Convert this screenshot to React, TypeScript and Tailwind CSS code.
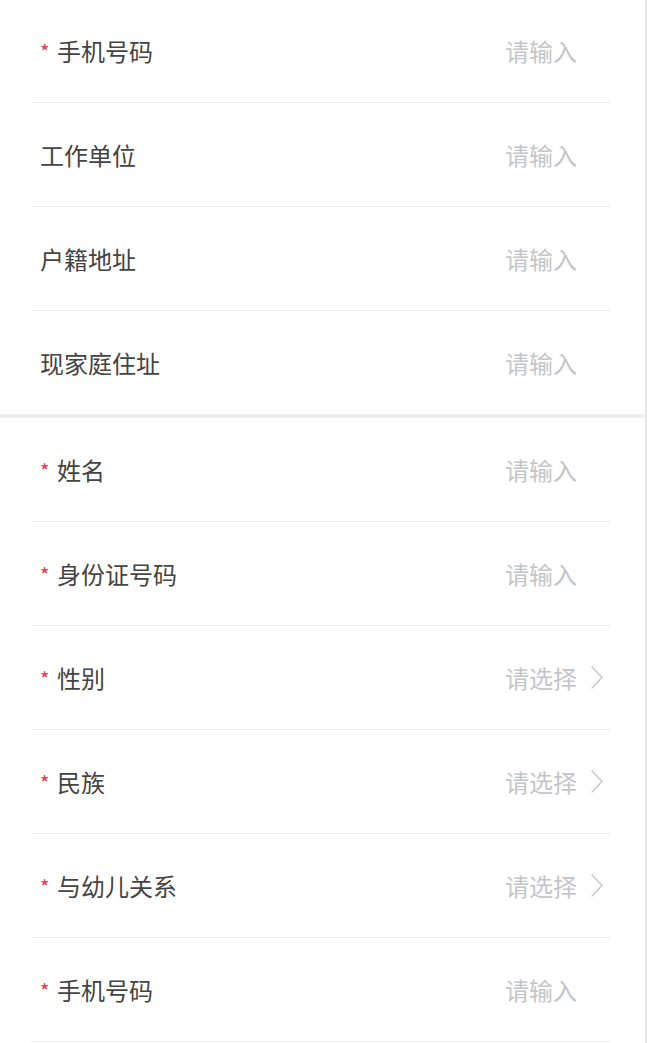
type Field = {
  label: string;
  required?: boolean;
  select?: boolean;
};

const contact: Field[] = [
  { label: '手机号码', required: true },
  { label: '工作单位' },
  { label: '户籍地址' },
  { label: '现家庭住址' },
];

const guardian: Field[] = [
  { label: '姓名', required: true },
  { label: '身份证号码', required: true },
  { label: '性别', required: true, select: true },
  { label: '民族', required: true, select: true },
  { label: '与幼儿关系', required: true, select: true },
  { label: '手机号码', required: true },
];

function Chevron() {
  return (
    <svg width="12" height="23" viewBox="0 0 12 23" fill="none" className="ml-[14px]">
      <polyline points="1,1 11,11.5 1,22" stroke="#c8c9cc" strokeWidth="1.5" strokeLinecap="round" strokeLinejoin="round" />
    </svg>
  );
}

function FormRow({ field, height, border = true }: { field: Field; height: string; border?: boolean }) {
  return (
    <div
      className={
        'ml-[31px] mr-[34px] flex items-center pl-[9px] ' + height + ' ' + (border ? 'border-b border-[#ebedf0]' : '')
      }
    >
      {field.required ? (
        <span className="w-[17px] pt-[2px] text-[20px] leading-none text-[#f0304a]">*</span>
      ) : null}
      <span className="flex-1 text-[24px] text-[#444444]">{field.label}</span>
      <span className="text-[24px] text-[#c4c5c8]">{field.select ? '请选择' : '请输入'}</span>
      <span className="flex w-[34px] items-center pr-2">{field.select ? <Chevron /> : null}</span>
    </div>
  );
}

export default function App() {
  return (
    <div
      className="flex min-h-screen w-[650px] bg-white"
      style={{ fontFamily: '"Noto Sans CJK SC", "Noto Sans", sans-serif' }}
    >
      <div className="w-[645px] bg-white">
        <div>
          <FormRow field={contact[0]} height="h-[103px]" />
          <FormRow field={contact[1]} height="h-[104px]" />
          <FormRow field={contact[2]} height="h-[104px]" />
          <FormRow field={contact[3]} height="h-[103px]" border={false} />
        </div>
        <div className="h-[4px] bg-[#f0f0f0]" />
        <div>
          {guardian.map((f) => (
            <FormRow key={f.label + 'g'} field={f} height="h-[104px]" />
          ))}
        </div>
      </div>
      <div className="w-[2px] bg-[#e6e6e6]" />
      <div className="w-[3px] bg-white" />
    </div>
  );
}
